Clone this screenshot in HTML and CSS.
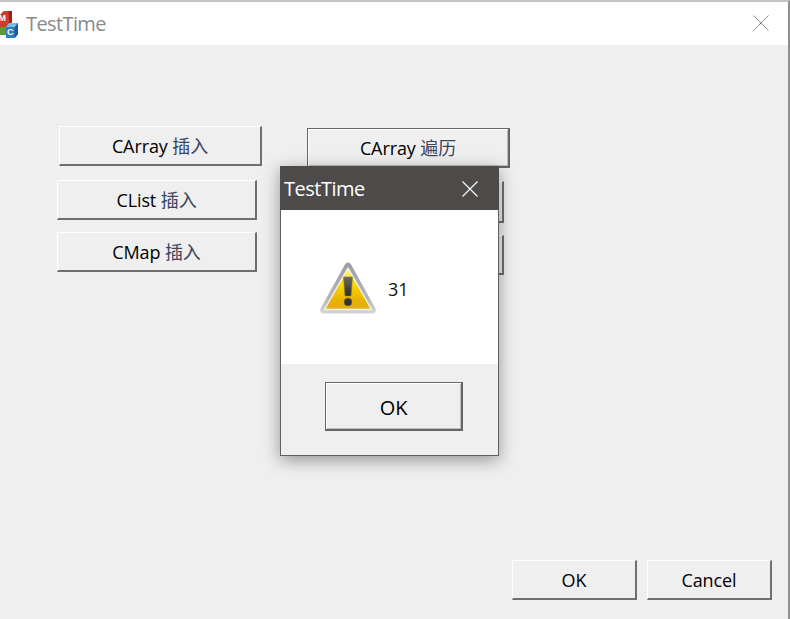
FILE: index.html
```html
<!DOCTYPE html>
<html lang="zh">
<head>
<meta charset="utf-8">
<title>TestTime</title>
<link rel="stylesheet" href="styles.css">
</head>
<body>
<div class="window">
  <header class="titlebar">
    <svg class="app-icon" viewBox="0 0 20 28" width="20" height="28" aria-hidden="true">
      <path d="M0 16 L7 16 L7 25 L0 25 Z" fill="#5c9a34"/>
      <path d="M0 6 L4 1.5 Q4.5 1 5.5 1 L12.5 1 Q13 1 13 2 L13 12 L8 17 L0 17 Z" fill="#cf3b2c"/>
      <path d="M9.5 1 L13 1 L13 12 L10.5 15 Z" fill="#9c2118"/>
      <path d="M7 17 L10 13 L19 13 L19 24 L15.5 28 L7 28 Z" fill="#2b7dbd"/>
      <path d="M7 17 L10 13 L19 13 L16 17 Z" fill="#7cbbe4"/>
      <path d="M16 17 L19 13 L19 24 L16 28 Z" fill="#175c94"/>
      <text class="app-m" x="-0.5" y="11">M</text>
      <text class="app-c" x="8" y="25">C</text>
    </svg>
    <span class="app-title">TestTime</span>
    <svg class="close-x" viewBox="0 0 16 16" width="16" height="16" aria-hidden="true">
      <path d="M0.5 0.5 L15.5 15.5 M15.5 0.5 L0.5 15.5" stroke="#8c8c8c" stroke-width="1" fill="none"/>
    </svg>
  </header>

  <main class="client">
    <div class="columns">
      <div class="col col-left">
        <button class="btn btn-a">CArray <span class="cjk">插入</span></button>
        <button class="btn btn-b">CList <span class="cjk">插入</span></button>
        <button class="btn btn-c">CMap <span class="cjk">插入</span></button>
      </div>
      <div class="col col-right">
        <button class="btn btn-d btn-default">CArray <span class="cjk">遍历</span></button>
        <button class="btn btn-e">CList <span class="cjk">遍历</span></button>
        <button class="btn btn-f">CMap <span class="cjk">遍历</span></button>
      </div>
    </div>
    <footer class="actions">
      <button class="btn btn-foot">OK</button>
      <button class="btn btn-foot">Cancel</button>
    </footer>
  </main>
</div>

<section class="dialog">
  <header class="dialog-head">
    <span class="dialog-title">TestTime</span>
    <svg class="dialog-close" viewBox="0 0 16 16" width="16" height="16" aria-hidden="true">
      <path d="M0.5 0.5 L15.5 15.5 M15.5 0.5 L0.5 15.5" stroke="#ffffff" stroke-width="1.1" fill="none"/>
    </svg>
  </header>
  <div class="dialog-body">
    <svg class="warn" viewBox="0 0 56 52" width="56" height="52" aria-hidden="true">
      <defs>
        <linearGradient id="warnFill" x1="0" y1="0" x2="0" y2="1">
          <stop offset="0" stop-color="#fff7a0"/>
          <stop offset="0.4" stop-color="#f8d800"/>
          <stop offset="0.8" stop-color="#eab000"/>
          <stop offset="1" stop-color="#e6b020"/>
        </linearGradient>
        <linearGradient id="warnRim" x1="0" y1="0" x2="0" y2="1">
          <stop offset="0" stop-color="#9a9ea3"/>
          <stop offset="0.7" stop-color="#b4b7ba"/>
          <stop offset="1" stop-color="#d4d5d6"/>
        </linearGradient>
        <linearGradient id="warnMark" x1="0" y1="0" x2="0" y2="1">
          <stop offset="0" stop-color="#6a6a64"/>
          <stop offset="1" stop-color="#2c2c28"/>
        </linearGradient>
      </defs>
      <path d="M28 0.5 C26.5 0.5 25.5 1.5 24.8 2.8 L0.8 46 C-0.6 49 1 51.5 4 51.5 L52 51.5 C55 51.5 56.6 49 55.2 46 L31.2 2.8 C30.5 1.5 29.5 0.5 28 0.5 Z" fill="url(#warnRim)"/>
      <path d="M28 6 L4.5 47.5 L51.5 47.5 Z" fill="url(#warnFill)" stroke="#f6f5ea" stroke-width="1.4" stroke-linejoin="round"/>
      <path d="M23.5 15 L32.5 15 L31 34 L25 34 Z" fill="url(#warnMark)" stroke="#8a7a20" stroke-width="0.6"/>
      <circle cx="28" cy="40" r="4" fill="#33332e" stroke="#8a7a20" stroke-width="0.6"/>
    </svg>
    <span class="dialog-msg">31</span>
  </div>
  <div class="dialog-foot">
    <button class="btn btn-dialog btn-default">OK</button>
  </div>
</section>
</body>
</html>
```

FILE: styles.css
```css
* { box-sizing: border-box; }

html, body {
  margin: 0;
  padding: 0;
  width: 790px;
  height: 619px;
  overflow: hidden;
  background: #efefef;
  font-family: "Open Sans", "Noto Sans", "Noto Sans CJK SC", sans-serif;
}

.window {
  width: 790px;
  height: 619px;
  display: flex;
  flex-direction: column;
  border-top: 2px solid #c4c4c4;
  border-right: 2px solid #8f8f8f;
}

.titlebar {
  height: 43px;
  flex: none;
  background: #ffffff;
  display: flex;
  align-items: center;
  overflow: hidden;
  padding-right: 19px;
}

.app-icon {
  flex: none;
  margin-left: -1px;
}

.app-m, .app-c {
  font-family: "Liberation Sans", sans-serif;
  font-weight: 700;
  fill: #ffffff;
}
.app-m { font-size: 9px; }
.app-c { font-size: 9px; }

.app-title {
  margin-left: 7px;
  font-size: 20px;
  letter-spacing: -0.6px;
  color: #8a8a8a;
}

.close-x {
  margin-left: auto;
  margin-bottom: 2px;
}

.client {
  flex: 1;
  display: flex;
  flex-direction: column;
  background: #efefef;
}

.columns {
  display: flex;
  align-items: flex-start;
}

.col {
  display: flex;
  flex-direction: column;
}

.col-left {
  margin-left: 57px;
  padding-top: 81px;
  width: 244px;
}

.col-right {
  padding-top: 83px;
}

.btn {
  display: block;
  padding: 0;
  background: #efefef;
  font-family: inherit;
  font-size: 18px;
  letter-spacing: -0.1px;
  color: #000000;
  border-style: solid;
  border-width: 1px 2px 2px 1px;
  border-color: #ffffff #6f6f6f #6f6f6f #ffffff;
  cursor: default;
  line-height: 1;
}

.cjk {
  font-family: "Noto Sans CJK SC", sans-serif;
  font-weight: 400;
  color: #3a4560;
}

.btn-a { width: 203px; height: 40px; margin-left: 2px; }
.btn-b { width: 200px; height: 40px; margin-top: 14px; }
.btn-c { width: 200px; height: 40px; margin-top: 12px; }

.btn-d { width: 203px; height: 40px; margin-left: 6px; }
.btn-e { width: 203px; height: 42px; margin-top: 13px; }
.btn-f { width: 203px; height: 40px; margin-top: 12px; }

.btn-default {
  border: 1px solid #666666;
  border-right-width: 2px;
  border-bottom-width: 2px;
  box-shadow: inset 1px 1px 0 #ffffff, inset -1px -1px 0 #bdbdbd;
}

.actions {
  margin-top: auto;
  display: flex;
  justify-content: flex-end;
  gap: 10px;
  padding-right: 16px;
  padding-bottom: 19px;
}

.btn-foot {
  width: 125px;
  height: 40px;
}

.dialog {
  position: absolute;
  left: 280px;
  top: 166px;
  width: 219px;
  height: 290px;
  display: flex;
  flex-direction: column;
  background: #efefef;
  border: 1px solid #5f5f5f;
  box-shadow: 0 4px 16px rgba(0, 0, 0, 0.38);
}

.dialog-head {
  flex: none;
  background: #4d4b49;
  display: flex;
  align-items: center;
  justify-content: space-between;
  padding: 1px 21px 0 4px;
  margin: -1px -1px 0 -1px;
  height: 44px;
}

.dialog-title {
  font-size: 20px;
  letter-spacing: -0.5px;
  color: #ffffff;
}

.dialog-body {
  height: 154px;
  flex: none;
  background: #ffffff;
  display: flex;
  align-items: center;
  padding-left: 39px;
}

.warn {
  flex: none;
  margin-top: 2px;
}

.dialog-msg {
  margin-left: 12px;
  margin-top: 4px;
  font-size: 18px;
  color: #111111;
}

.dialog-foot {
  flex: 1;
  padding: 18px 0 0 44px;
}

.btn-dialog {
  width: 138px;
  height: 49px;
  padding-top: 4px;
  font-size: 20px;
}
```
